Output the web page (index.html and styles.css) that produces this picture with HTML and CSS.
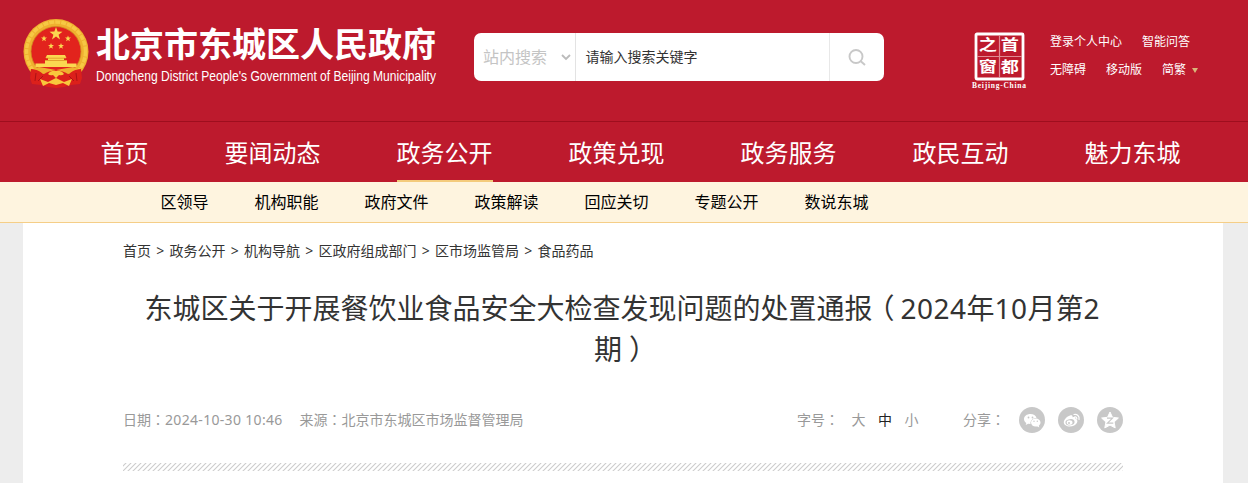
FILE: index.html
```html
<!DOCTYPE html>
<html lang="zh-CN">
<head>
<meta charset="utf-8">
<title>北京市东城区人民政府</title>
<link rel="stylesheet" href="styles.css">
</head>
<body>
<header class="header">
  <a class="brand">
    <svg class="emblem" width="66" height="70" viewBox="0 0 66 70">
      <circle cx="33" cy="32.500" r="32.500" fill="#efb02f"/>
      <circle cx="33" cy="32.500" r="29.500" fill="none" stroke="#f6c844" stroke-width="3.500" stroke-dasharray="5 1"/>
      <circle cx="33" cy="32.500" r="25" fill="#e2231d" stroke="#d08a22" stroke-width=".8"/>
      <g fill="#fbd850">
        <path d="M33 8l1.600 4.600 4.900.1-3.900 3 1.400 4.700-4-2.800-4 2.800 1.400-4.700-3.900-3 4.900-.1z"/>
        <path id="s" d="M21 16.500l.8 2.100h2.200l-1.800 1.400.7 2.200-1.900-1.300-1.900 1.300.7-2.200-1.800-1.400h2.200z"/>
        <use href="#s" x="24"/><use href="#s" x="7" y="7.500"/><use href="#s" x="17" y="7.500"/>
        <path d="M24 36h18l1.500 3h-21zM25 39h16v2H25zM22 41h22v4H22zM12.500 44.500h41V48h-41z"/>
      </g>
      <path d="M23 39.200h20M22 41.500h22" stroke="#d98a20" stroke-width=".7"/>
      <path d="M8 50q8 0 13 5l12-3 12 3q5-5 13-5l1 9-2 6-9 1-7 2-8 1-8-1-7-2-9-1-2-6z" fill="#dc201b"/>
      <path d="M10 50q6 1 10 5 6-3 13-4 7 1 13 4 4-4 10-5l-6-2-17 3-17-3z" fill="#efb02f"/>
      <path d="M25 55q3-4 8-3 5-1 8 3-2 2-5 1l-3 3-3-3q-3 1-5-1zM17 60l8 3 8-4 8 4 8-3-3 7-6-3-7 2-7-2-6 3z" fill="#f8c73c"/>
      <path d="M13 54l-1 8M53 54l1 8M20 57l-5 5M46 57l5 5" stroke="#ad1114" stroke-width="1"/>
    </svg>
    <svg class="brand-name" width="350" height="70" viewBox="0 0 350 70">
      <text class="name-zh" x="0" y="38">北京市东城区人民政府</text>
      <text class="name-en" x="0" y="62" textLength="340" lengthAdjust="spacingAndGlyphs">Dongcheng District People's Government of Beijing Municipality</text>
    </svg>
  </a>
  <form class="search">
    <span class="search-scope">站内搜索<svg width="10" height="7" viewBox="0 0 10 7"><path d="M1 1l4 4 4-4" fill="none" stroke="#bbb" stroke-width="1.800"/></svg></span>
    <span class="search-field">请输入搜索关键字</span>
    <span class="search-button"><svg width="18" height="17" viewBox="0 0 18 17"><g fill="none" stroke="#c8c8c8" stroke-width="1.900"><circle cx="8" cy="7.500" r="6.500"/><path d="M12.500 12l4.500 4"/></g></svg></span>
  </form>
  <svg class="capital" width="56" height="60" viewBox="0 0 56 60">
    <rect x="4" y="2" width="47" height="45" rx="1" fill="none" stroke="#fff" stroke-width="2.800"/>
    <path d="M27.500 3v43M5 24.500h45" stroke="#e08a92" stroke-width="1.200"/>
    <g class="seal" transform="scale(1.250 1)"><text x="5.500" y="18.500">之</text><text x="23" y="18.500">首</text><text x="5.500" y="40.500">窗</text><text x="23" y="40.500">都</text></g>
    <text class="seal-en" x="0" y="55.500" textLength="54">Beijing-China</text>
  </svg>
  <div class="links">
    <div class="links-row"><a>登录个人中心</a><a>智能问答</a></div>
    <div class="links-row"><a>无障碍</a><a>移动版</a><a>简繁<i class="caret"></i></a></div>
  </div>
</header>
<nav class="nav"><a><span>首页</span></a><a><span>要闻动态</span></a><a class="active"><span>政务公开</span></a><a><span>政策兑现</span></a><a><span>政务服务</span></a><a><span>政民互动</span></a><a><span>魅力东城</span></a></nav>
<nav class="subnav"><a>区领导</a><a>机构职能</a><a>政府文件</a><a>政策解读</a><a>回应关切</a><a>专题公开</a><a>数说东城</a></nav>
<main class="page">
  <div class="crumbs"><a>首页</a><b>&gt;</b><a>政务公开</a><b>&gt;</b><a>机构导航</a><b>&gt;</b><a>区政府组成部门</a><b>&gt;</b><a>区市场监管局</a><b>&gt;</b><a>食品药品</a></div>
  <h1 class="title">东城区关于开展餐饮业食品安全大检查发现问题的处置通报<span class="punct open" lang="zh-TW">（</span><span class="num">2024</span>年<span class="num">10</span>月第2<br>期<span class="punct close" lang="zh-TW">）</span></h1>
  <div class="meta">
    <span class="date">日期<span class="punct" lang="zh-TW">：</span><span class="stamp">2024-10-30 10:46</span></span>
    <span class="source">来源<span class="punct" lang="zh-TW">：</span>北京市东城区市场监督管理局</span>
    <span class="sizes"><span>字号<span class="punct" lang="zh-TW">：</span></span><a>大</a><a class="current">中</a><a>小</a></span>
    <span class="share"><span class="share-label">分享<span class="punct" lang="zh-TW">：</span></span>
      <svg width="26" height="26" viewBox="0 0 26 26"><circle cx="13" cy="13" r="13" fill="#c8c8c8"/><path d="M11.500 7C7.800 7 5 9.200 5 12c0 1.600.9 3 2.300 3.900L6.700 18l2.500-1.200 2.300.3c-.5-3.400 2.300-6.100 6-6.100C16.900 8.600 14.500 7 11.500 7z" fill="#fff"/><path d="M21.500 15.500c0-2.300-2.200-4.100-4.800-4.100S12 13.200 12 15.500s2.100 4.100 4.700 4.100l1.700-.2 1.900 1-.5-1.700c1-.7 1.700-1.900 1.700-3.200z" fill="#fff"/><g fill="#c8c8c8"><circle cx="9.500" cy="10.500" r=".9"/><circle cx="13.500" cy="10.500" r=".9"/><circle cx="15" cy="14.300" r=".7"/><circle cx="18.300" cy="14.300" r=".7"/></g></svg>
      <svg width="26" height="26" viewBox="0 0 26 26"><circle cx="13" cy="13" r="13" fill="#c8c8c8"/><path d="M12 8.500c1.500-.6 2.900-.3 2.500 1.800 2-.8 3.700-.4 3 1.600 2 .6 2.300 2.200 1.500 3.800-1 2.300-4 3.800-7.200 3.800-3.300 0-6-1.600-6-4.200C5.800 12.600 9 9.400 12 8.500z" fill="#fff"/><ellipse cx="12" cy="15.200" rx="4.600" ry="3.100" fill="#c8c8c8" transform="rotate(-8 12 15.200)"/><ellipse cx="11.600" cy="15.500" rx="2.900" ry="2.300" fill="#fff"/><circle cx="11" cy="15.900" r="1" fill="#c8c8c8"/><path d="M16 7.500c3-.8 5.800 1.700 5 5M16.800 9.800c1.300-.2 2.300.8 1.900 2.200" fill="none" stroke="#fff" stroke-width="1.200" stroke-linecap="round"/></svg>
      <svg width="26" height="26" viewBox="0 0 26 26"><circle cx="13" cy="13" r="13" fill="#c8c8c8"/><path d="M13 5l2.500 5.300 5.900.7-4.300 4 1.100 5.900-5.200-2.800-5.200 2.800 1.100-5.900-4.300-4 5.900-.7z" fill="#fff" stroke="#fff" stroke-linejoin="round"/><path d="M10 11.200h5.500L10.500 16.200h5.800" fill="none" stroke="#c8c8c8" stroke-width="1.200"/></svg>
    </span>
  </div>
  <svg class="rule" width="1000" height="8"><defs><pattern id="hatch" width="5" height="8" patternUnits="userSpaceOnUse"><path d="M-11 9L-1-1M-6 9L4-1M-1 9L9-1M4 9L14-1" stroke="#ccc" stroke-width="1.100"/></pattern></defs><rect width="1000" height="8" fill="url(#hatch)"/></svg>
</main>
</body>
</html>
```
FILE: styles.css
```css
* { box-sizing: border-box; }
body { margin: 0; height: 483px; overflow: hidden; background: #ededed; color: #333; font-family: "Noto Sans", "Noto Sans CJK SC", sans-serif; font-size: 14px; }
svg { display: block; flex: none; overflow: visible; }
.header { display: flex; align-items: flex-start; height: 121px; background: #bd1a2d; color: #fff; padding-left: 23px; }
.brand { display: flex; padding-top: 19px; width: 451px; gap: 7px; flex: none; }
.brand-name { fill: #fff; }
.name-zh { font: bold 34px "Noto Sans CJK SC", sans-serif; }
.name-en { font: 14px "Liberation Sans", sans-serif; }
.search { display: flex; margin: 33px 0 0; width: 410px; height: 48px; border-radius: 7px; background: #fff; line-height: 48px; flex: none; }
.search-scope { display: flex; align-items: center; gap: 14px; width: 102px; padding-left: 9px; border-right: 1px solid #e3e3e3; color: #c4c4c4; font-size: 16px; }
.search-field { width: 254px; padding-left: 9.500px; border-right: 1px solid #e8e8e8; color: #333; }
.search-button { display: flex; align-items: center; padding-left: 18px; }
.capital { margin: 32px 0 0 88px; }
.seal { fill: #fff; font: bold 14.500px "Noto Sans CJK SC", sans-serif; }
.seal-en { fill: #fff; font: bold 7.500px "Liberation Serif", serif; }
.links { margin: 28px 0 0 22px; font-size: 12px; line-height: 28px; }
.links-row { display: flex; gap: 20px; }
.links-row a { display: flex; align-items: center; }
.caret { border: 3px solid transparent; border-top: 5px solid #d9b779; border-bottom: 0; margin-left: 6px; }
.nav { display: flex; gap: 76px; height: 61px; padding-left: 101px; border-top: 1px solid #9e0e1e; background: #bd1a2d; color: #fff; font-size: 24px; line-height: 62px; }
.nav a { white-space: nowrap; flex: none; height: 60px; }
.nav span { display: block; margin-left: -.5px; margin-right: .5px; }
.nav .active { border-bottom: 2px solid #f4cb7c; }
.subnav { display: flex; gap: 46px; height: 41px; padding-left: 160.500px; border-bottom: 1px solid #f5ce87; background: #fef4df; color: #000; font-size: 16px; line-height: 40px; }
.page { width: 1200px; height: 260px; margin-left: 23px; padding: 18px 100px 0; background: #fff; }
.crumbs { display: flex; height: 20px; line-height: 20px; }
.crumbs b { width: 18.500px; text-align: center; font-weight: normal; }
.title { margin: 26px 0 0 -2px; height: 80px; font-size: 28px; line-height: 40px; font-weight: 400; text-align: center; white-space: nowrap; }
.num { letter-spacing: .5px; }
.punct { font-family: "Noto Sans CJK TC", sans-serif; }
.open { margin-left: -6px; margin-right: 6px; }
.close { margin-left: 7px; margin-right: -7px; }
.meta { display: flex; align-items: center; height: 26px; margin-top: 40px; color: #999; white-space: nowrap; }
.date, .source, .share-label { line-height: 18px; padding-bottom: 2px; }
.date { width: 176.500px; }
.stamp { letter-spacing: .32px; }
.source { width: 497.500px; }
.sizes { display: flex; align-items: baseline; gap: 12.500px; width: 166px; line-height: 18px; padding-bottom: 2px; }
.sizes .current { color: #222; }
.share { display: flex; align-items: center; gap: 13px; }
.share-label { width: 43px; }
.rule { margin-top: 30px; }
```
